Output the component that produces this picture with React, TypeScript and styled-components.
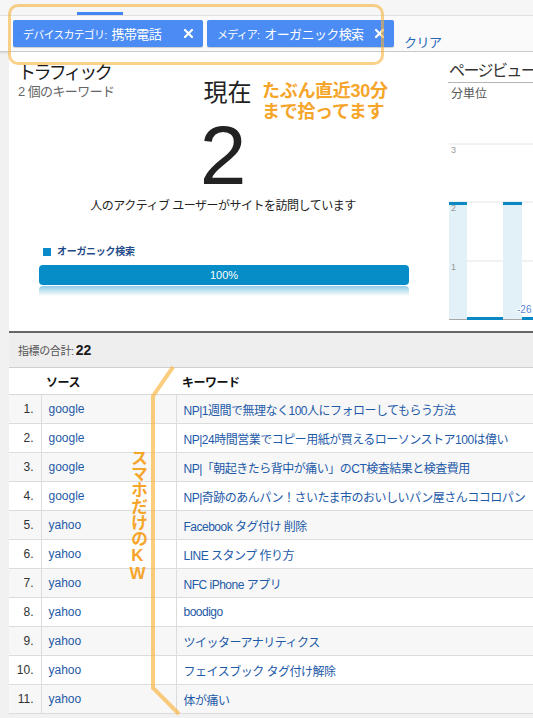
import React from 'react';
import styled, { createGlobalStyle } from 'styled-components';

const GlobalStyle = createGlobalStyle`
  html, body {
    margin: 0;
    padding: 0;
    background: #ffffff;
  }
  body {
    font-family: "Liberation Sans", "Noto Sans CJK JP", sans-serif;
  }
`;

const Page = styled.div`
  position: relative;
  width: 533px;
  height: 718px;
  overflow: hidden;
  background: #f1f1f1;
`;

const TopStrip = styled.div`
  height: 15px;
  background: #f6f6f6;
  border-bottom: 1px solid #e2e2e2;
  display: flex;
  align-items: flex-end;
  padding-left: 77px;
`;

const TabMark = styled.div`
  width: 46px;
  height: 3px;
  background: #4285f4;
`;

const FilterBar = styled.div`
  height: 36px;
  box-sizing: border-box;
  background: #fafafa;
  border-bottom: 1px solid #c9c9c9;
  box-shadow: 0 1px 2px rgba(0, 0, 0, 0.12);
  display: flex;
  align-items: flex-start;
  gap: 4px;
  padding: 4px 0 0 13px;
`;

const Chip = styled.div<{ $w: number }>`
  display: flex;
  align-items: center;
  width: ${(p) => p.$w}px;
  height: 27px;
  box-sizing: border-box;
  padding: 0 10px;
  background: #4b8bf4;
  color: #fff;
  border-radius: 2px;
  box-shadow: 0 1px 1px rgba(0, 0, 0, 0.18);
  white-space: nowrap;
`;

const ChipKey = styled.span`
  font-size: 11px;
  letter-spacing: -0.8px;
`;

const ChipVal = styled.span`
  font-size: 13px;
  margin-left: 5px;
  letter-spacing: -0.6px;
`;

const ChipClose = styled.span`
  margin-left: auto;
  display: flex;
`;

const ClearLink = styled.span`
  margin: 12px 0 0 6px;
  font-size: 13px;
  color: #2265b5;
  letter-spacing: -0.5px;
`;

const Body = styled.div`
  margin-left: 9px;
  background: #fff;
`;

const TopSection = styled.div`
  height: 279px;
  display: flex;
  gap: 10px;
  overflow: hidden;
`;

const LeftPanel = styled.div`
  width: 428px;
  flex-shrink: 0;
  display: flex;
  flex-direction: column;
  padding-top: 10px;
  box-sizing: border-box;
`;

const HeadRow = styled.div`
  display: grid;
  grid-template-columns: 1fr auto 1fr;
  align-items: start;
  padding-left: 9px;
`;

const TitleBlock = styled.div`
  display: flex;
  flex-direction: column;
`;

const Title = styled.div`
  font-size: 18px;
  line-height: 22px;
  color: #1a1a1a;
  letter-spacing: -2.6px;
`;

const SubTitle = styled.div`
  font-size: 13px;
  line-height: 16px;
  color: #666;
  letter-spacing: -0.6px;
`;

const NowLabel = styled.div`
  margin-top: 16px;
  font-size: 24px;
  line-height: 30px;
  color: #222;
`;

const BigNumber = styled.div`
  margin-top: 5px;
  text-align: center;
  font-size: 84px;
  line-height: 84px;
  color: #222;
`;

const Description = styled.div`
  margin-top: 1px;
  text-align: center;
  font-size: 12px;
  line-height: 16px;
  color: #222;
  letter-spacing: -0.5px;
`;

const Legend = styled.div`
  margin: 32px 0 0 34px;
  display: flex;
  align-items: center;
  gap: 6px;
  font-size: 10px;
  line-height: 12px;
  font-weight: bold;
  color: #1f4c88;
  letter-spacing: -0.3px;
`;

const LegendSwatch = styled.span`
  width: 8px;
  height: 8px;
  background: #0a8ac8;
`;

const BarTrack = styled.div`
  margin: 7px 0 0 30px;
  width: 370px;
`;

const Bar = styled.div`
  height: 20px;
  border-radius: 4px;
  background: #068cc6;
  color: #fff;
  font-size: 11px;
  display: flex;
  align-items: center;
  justify-content: center;
`;

const BarReflection = styled.div`
  height: 10px;
  margin-top: 1px;
  border-radius: 4px 4px 0 0;
  background: linear-gradient(to bottom, rgba(6, 140, 198, 0.45), rgba(6, 140, 198, 0));
`;

const RightPanel = styled.div`
  flex: 1;
  min-width: 0;
  padding-top: 8px;
  white-space: nowrap;
`;

const ChartTitle = styled.div`
  font-size: 16px;
  line-height: 22px;
  color: #333;
  padding-left: 1px;
  border-bottom: 1px solid #b5b5b5;
  margin-left: 1px;
  letter-spacing: -1.6px;
`;

const ChartUnit = styled.div`
  font-size: 12px;
  line-height: 18px;
  color: #555;
  padding-left: 4px;
  margin-top: 2px;
`;

const ChartBox = styled.div`
  margin-top: 6px;
`;

const Summary = styled.div`
  border-top: 2px solid #666;
  height: 37px;
  box-sizing: border-box;
  background: #eeeeee;
  border-bottom: 1px solid #cfcfcf;
  display: flex;
  align-items: center;
  padding-left: 9px;
  gap: 2px;
`;

const SummaryLabel = styled.span`
  font-size: 11px;
  color: #555;
  letter-spacing: -0.4px;
`;

const SummaryValue = styled.span`
  font-size: 14px;
  font-weight: bold;
  color: #1a1a1a;
`;

const Table = styled.table`
  width: 100%;
  border-collapse: collapse;
  table-layout: fixed;
  font-size: 12px;
`;

const HeadCell = styled.th<{ $pad?: number }>`
  height: 26px;
  padding: 0 0 0 ${(p) => p.$pad ?? 0}px;
  text-align: left;
  font-weight: bold;
  color: #111;
  background: #fff;
  border-bottom: 1px solid #d8d8d8;
  letter-spacing: -0.5px;
`;

const Row = styled.tr<{ $odd: boolean }>`
  height: 29px;
  background: ${(p) => (p.$odd ? '#f7f7f7' : '#ffffff')};
`;

const NumCell = styled.td`
  text-align: right;
  padding: 0 7px 0 0;
  color: #333;
  border-bottom: 1px solid #dcdcdc;
  border-right: 1px solid #dcdcdc;
`;

const SourceCell = styled.td`
  padding: 0 0 0 7px;
  color: #1e5aa8;
  border-bottom: 1px solid #dcdcdc;
  border-right: 1px solid #dcdcdc;
`;

const KeywordCell = styled.td`
  padding: 0 0 0 7px;
  color: #1e5aa8;
  white-space: nowrap;
  overflow: hidden;
  border-bottom: 1px solid #dcdcdc;
  letter-spacing: -0.5px;
`;

const Annotation = styled.div`
  position: absolute;
  inset: 0;
  pointer-events: none;
`;

const NoteBox = styled.div`
  position: absolute;
  left: 8px;
  top: 4px;
  width: 376px;
  height: 61px;
  box-sizing: border-box;
  border: 3px solid rgba(247, 178, 58, 0.6);
  border-radius: 10px;
`;

const NoteText = styled.div`
  position: absolute;
  left: 262px;
  top: 81px;
  font-size: 18px;
  line-height: 21px;
  font-weight: bold;
  color: #f6a52b;
  letter-spacing: -0.3px;
`;

const NoteVertical = styled.div`
  position: absolute;
  left: 128px;
  top: 449px;
  writing-mode: vertical-rl;
  text-orientation: upright;
  font-size: 17px;
  line-height: 19px;
  font-weight: bold;
  color: #f6a52b;
  letter-spacing: -0.8px;
`;

const Bracket = styled.svg`
  position: absolute;
  left: 0;
  top: 0;
`;

const rows: [string, string][] = [
  ['google', 'NP|1週間で無理なく100人にフォローしてもらう方法'],
  ['google', 'NP|24時間営業でコピー用紙が買えるローソンストア100は偉い'],
  ['google', 'NP|「朝起きたら背中が痛い」のCT検査結果と検査費用'],
  ['google', 'NP|奇跡のあんパン！さいたま市のおいしいパン屋さんココロパン'],
  ['yahoo', 'Facebook タグ付け 削除'],
  ['yahoo', 'LINE スタンプ 作り方'],
  ['yahoo', 'NFC iPhone アプリ'],
  ['yahoo', 'boodigo'],
  ['yahoo', 'ツイッターアナリティクス'],
  ['yahoo', 'フェイスブック タグ付け解除'],
  ['yahoo', '体が痛い'],
];

const CloseIcon = () => (
  <svg width="9" height="9" viewBox="0 0 9 9">
    <path d="M1 1 L8 8 M8 1 L1 8" stroke="#fff" strokeWidth="2.2" strokeLinecap="square" />
  </svg>
);

const PageviewChart = () => (
  <svg width="90" height="214" viewBox="0 0 90 214">
    <line x1="2" y1="35" x2="90" y2="35" stroke="#e4e4e4" />
    <line x1="2" y1="93" x2="90" y2="93" stroke="#e4e4e4" />
    <line x1="2" y1="152" x2="90" y2="152" stroke="#e4e4e4" />
    <rect x="2" y="93" width="18" height="117" fill="#e2f0f7" />
    <rect x="56" y="93" width="19" height="117" fill="#e2f0f7" />
    <rect x="2" y="93" width="18" height="3" fill="#0a88c6" />
    <rect x="56" y="93" width="19" height="3" fill="#0a88c6" />
    <line x1="2" y1="210.5" x2="90" y2="210.5" stroke="#a8a8a8" />
    <rect x="20" y="208" width="36" height="3" fill="#0a88c6" />
    <rect x="75" y="208" width="15" height="3" fill="#0a88c6" />
    <g fontSize="9" fill="#999" fontFamily="Liberation Sans, sans-serif">
      <text x="4" y="44">3</text>
      <text x="4" y="102">2</text>
      <text x="4" y="161">1</text>
    </g>
    <text x="70" y="204" fontSize="10" fill="#5a88d4" stroke="#fff" strokeWidth="2" paintOrder="stroke" fontFamily="Liberation Sans, sans-serif">
      -26
    </text>
  </svg>
);

export default function App() {
  return (
    <Page>
      <GlobalStyle />
      <TopStrip>
        <TabMark />
      </TopStrip>
      <FilterBar>
        <Chip $w={190}>
          <ChipKey>デバイスカテゴリ:</ChipKey>
          <ChipVal>携帯電話</ChipVal>
          <ChipClose>
            <CloseIcon />
          </ChipClose>
        </Chip>
        <Chip $w={187}>
          <ChipKey>メディア:</ChipKey>
          <ChipVal>オーガニック検索</ChipVal>
          <ChipClose>
            <CloseIcon />
          </ChipClose>
        </Chip>
        <ClearLink>クリア</ClearLink>
      </FilterBar>
      <Body>
        <TopSection>
          <LeftPanel>
            <HeadRow>
              <TitleBlock>
                <Title>トラフィック</Title>
                <SubTitle>2 個のキーワード</SubTitle>
              </TitleBlock>
              <NowLabel>現在</NowLabel>
              <div />
            </HeadRow>
            <BigNumber>2</BigNumber>
            <Description>人のアクティブ ユーザーがサイトを訪問しています</Description>
            <Legend>
              <LegendSwatch />
              オーガニック検索
            </Legend>
            <BarTrack>
              <Bar>100%</Bar>
              <BarReflection />
            </BarTrack>
          </LeftPanel>
          <RightPanel>
            <ChartTitle>ページビュー</ChartTitle>
            <ChartUnit>分単位</ChartUnit>
            <ChartBox>
              <PageviewChart />
            </ChartBox>
          </RightPanel>
        </TopSection>
        <Summary>
          <SummaryLabel>指標の合計:</SummaryLabel>
          <SummaryValue>22</SummaryValue>
        </Summary>
        <Table>
          <colgroup>
            <col style={{ width: 32 }} />
            <col style={{ width: 135 }} />
            <col />
          </colgroup>
          <thead>
            <tr>
              <HeadCell />
              <HeadCell $pad={5}>ソース</HeadCell>
              <HeadCell $pad={6}>キーワード</HeadCell>
            </tr>
          </thead>
          <tbody>
            {rows.map(([src, kw], i) => (
              <Row key={i} $odd={i % 2 === 0}>
                <NumCell>{i + 1}.</NumCell>
                <SourceCell>{src}</SourceCell>
                <KeywordCell>{kw}</KeywordCell>
              </Row>
            ))}
          </tbody>
        </Table>
      </Body>
      <Annotation>
        <NoteBox />
        <NoteText>
          たぶん直近30分
          <br />
          まで拾ってます
        </NoteText>
        <Bracket width="533" height="718">
          <polyline
            points="173,367 153,396 153,688 179,714"
            fill="none"
            stroke="rgba(247, 178, 58, 0.65)"
            strokeWidth="4"
          />
        </Bracket>
        <NoteVertical>スマホだけのKW</NoteVertical>
      </Annotation>
    </Page>
  );
}
